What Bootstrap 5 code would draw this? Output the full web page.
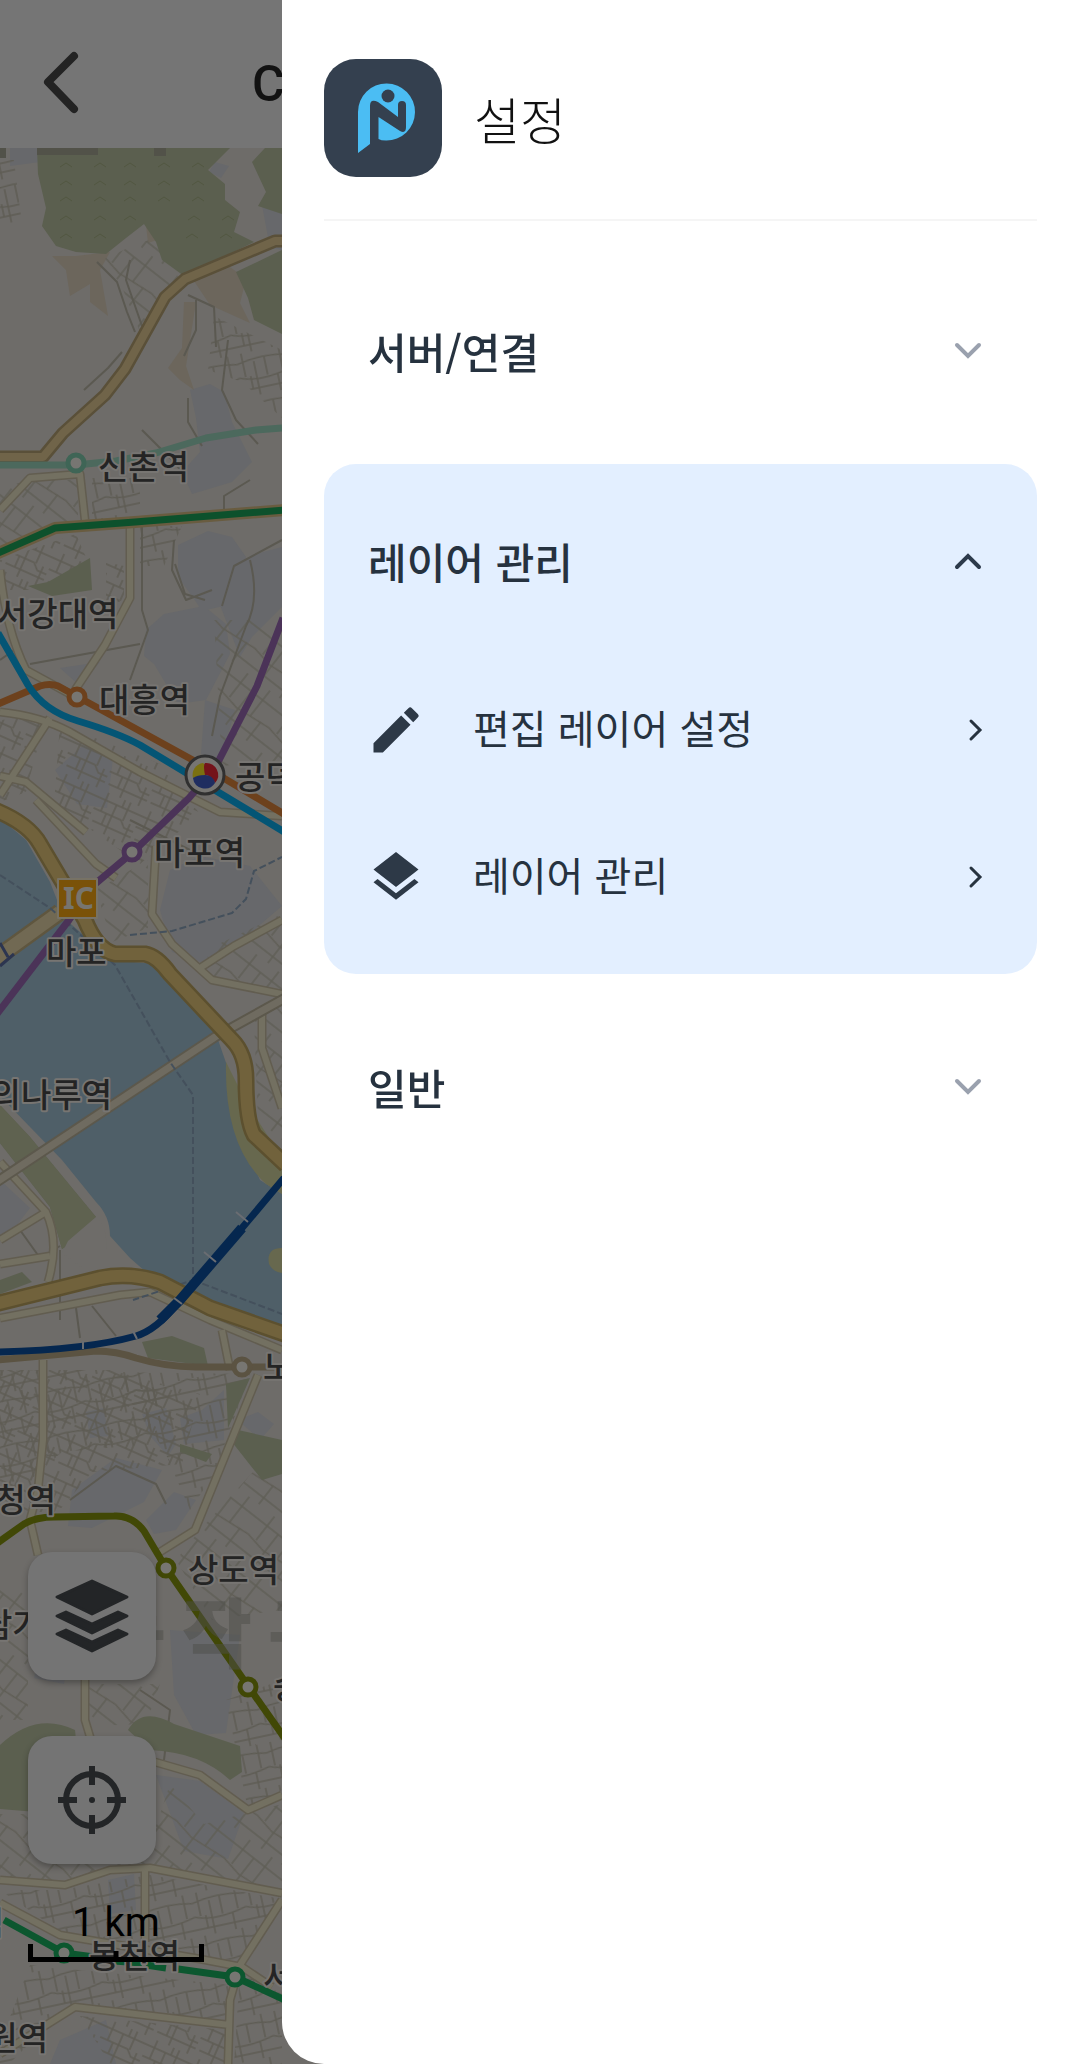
<!DOCTYPE html>
<html lang="ko">
<head>
<meta charset="utf-8">
<meta name="viewport" content="width=device-width, initial-scale=1">
<title>설정</title>
<link href="https://cdn.jsdelivr.net/npm/bootstrap@5.3.0/dist/css/bootstrap.min.css" rel="stylesheet">
<style>
  body { font-family: Roboto, "Noto Sans CJK KR", sans-serif; background: #6e6c69; color: #26323f; }
  .app-screen { min-height: 100vh; overflow: hidden; }
  .app-bar { height: 148px; background: #757575; padding: 18px 40px 0; color: #121212; }
  .back-btn { width: 42px; height: 64px; }
  .app-title { font-size: 50px; line-height: 64px; font-weight: 500; margin-left: 170px; padding-top: 2px; white-space: nowrap; }
  .map-pane { min-height: 0; }
  .map-art { position: absolute; left: 0; top: -148px; }
  .map-label { font: 500 33px "Noto Sans CJK KR", sans-serif; fill: #242424; stroke: #777572; stroke-width: 4px; paint-order: stroke; }
  .district-label { font: 900 76px "Noto Sans CJK KR", sans-serif; fill: #4e4d4a; fill-opacity: .5; }
  .map-tools { position: absolute; left: 28px; bottom: 102px; gap: 56px; }
  .tool-btn { width: 128px; height: 128px; border-radius: 24px; background: #747474; box-shadow: 0 3px 6px rgba(0,0,0,.3); }
  .map-scale { width: 176px; margin-top: -18px; color: #000; }
  .map-scale span { font-size: 40px; line-height: 42px; }
  .drawer { --bs-offcanvas-width: calc(100% - 282px); --bs-offcanvas-bg: #fff; border: 0 !important; border-bottom-left-radius: 42px; color: #26323f; }
  .drawer-head { margin: 0 43px 0 42px; padding: 59px 0 42px; gap: 32px; border-bottom: 2px solid #f5f5f5; }
  .drawer-title { font-family: "Noto Sans CJK KR", sans-serif; font-size: 50px; line-height: 64px; font-weight: 300; color: #111; }
  .drawer-body { padding: 33px 43px 0 42px; gap: 16px; font-family: "Noto Sans CJK KR", sans-serif; }
  .menu-group { border-radius: 32px; }
  .menu-group.is-open { background: #e3efff; padding-bottom: 24px; }
  .group-btn { height: 194px; padding: 0 54px 0 44px; font-size: 42px; line-height: 60px; font-weight: 500; color: inherit; }
  .is-open .group-btn { margin-bottom: -2px; }
  .menu-link { height: 147px; padding: 0 54px 0 42px; font-size: 40px; line-height: 56px; color: inherit; }
  .menu-link span { padding-bottom: 6px; }
  .menu-link svg:first-child { margin-right: 47px; }
</style>
</head>
<body>
<div class="app-screen position-relative d-flex flex-column">
  <header class="app-bar d-flex align-items-center">
    <button class="back-btn btn p-0 border-0 d-flex" type="button" aria-label="뒤로">
      <svg width="42" height="64" viewBox="0 0 42 64" fill="none" stroke="#232323" stroke-width="8" stroke-linecap="round" stroke-linejoin="round"><path d="M34 5 8 31l26 27"/></svg>
    </button>
    <div class="app-title">C</div>
  </header>
  <main class="map-pane position-relative flex-grow-1">
    <svg class="map-art" width="282" height="2064" viewBox="0 0 282 2064" fill="none" stroke-linejoin="round">
      <defs>
        <clipPath id="mapClip"><path d="M0 148H282V2064H0z"/></clipPath>
        <pattern id="streetsA" width="46" height="40" patternUnits="userSpaceOnUse" patternTransform="rotate(24)"><path d="M0 8h46M0 20h30l6 6h10M4 32h42M8 0v20M20 8v32M32 0v20M40 20v20M14 20v12M26 0v8" stroke="#5e5c54" stroke-width="1.5"/></pattern>
        <pattern id="streetsB" width="52" height="44" patternUnits="userSpaceOnUse" patternTransform="rotate(-12)"><path d="M0 10q26 -6 52 0M0 24q20 8 52 0M0 37h52M6 0v24M17 10v34M28 8v18M38 26v18M44 0v24M11 24v13" stroke="#5e5c54" stroke-width="1.5"/></pattern>
        <pattern id="streetsC" width="60" height="54" patternUnits="userSpaceOnUse" patternTransform="rotate(38)"><path d="M0 12h60M0 30l22 4 38-4M0 46h60M10 0v30M24 12v42M38 0v32M50 30v24" stroke="#605e56" stroke-width="1.5"/></pattern>
      </defs>
      <g clip-path="url(#mapClip)">
        <path fill="#6e6c69" d="M0 148H282V2064H0z"/>
        <!-- built-up blocks -->
        <g fill="#67686b">
          <path d="M190 390l20-6 14 8 8 30 20 40-20 20-40 12-10-22 18-20-4-34zM178 545l30-14 24 6 14 20-10 46-34 8-8-12-16-22zM220 605l6-32 26-18 30-8v60l-30 30-12 20zM146 630l18-16 40-8 22 18 4 30-24 46-28 4-24-40-10-8zM60 668l40-6-20 24zM55 770l30-26 28 14-6 50-30-4zM262 205l20 5v40l-12-2zM215 162l14 4-8 12-12-6zM205 700l30 10-14 50-20-6zM160 910l10-40 30-14 50 10 32 40-70 60-40-14zM0 1180l30 28-20 26-10 6zM86 1412l18-4 4 28-18 2zM142 1414l24-6 10 36-8 12-18-20zM180 1418l22-8 22-20v50l-40 4zM72 1490l44-32 46 12-18 32-52 26-24-2zM146 1520l28-28 22 8-20 30-22 4zM238 1420l20-8 16 12-14 16zM170 1630l70 5-14 98-30 2-22-40zM156 1775l44 6 44 32-16 46-44-8zM108 1880l26-6 2 36-26 4zM60 2040l46-20 10 44H50zM40 1650l30-4-6 38-30-6zM10 148h30v14l-30 4z"/>
        </g>
        <path fill="#6c665c" d="M52 256l24 0 34-4-10 18 8 46-18-14 0-18-20 12-4-26zM190 275l40-8 16 12-6 24 10 20-40-18zM184 302l12 0-10 64 8 24-14-10-12-12 14-20zM146 225l16-8-2 22-12 4z"/>
        <g>
          <path fill="url(#streetsB)" d="M0 160h14l8 64H0z"/><path fill="url(#streetsC)" d="M98 262l34-16 34-12 16 38-30 36-12 24-20-50z"/>
          <path fill="url(#streetsB)" d="M214 316l68 34v68l-40-36-34-12z"/>
          <path fill="url(#streetsC)" d="M0 490l26-10h52v42L0 548z"/><path fill="url(#streetsB)" d="M92 478h48v42H92zM140 526h42l-18 40h-24z"/>
          <path fill="url(#streetsA)" d="M0 560l76-26 12 28-30 28H0zM106 562l18 4v36h-18zM0 720l46-4-20 76-26 10zM60 724l100 40 40 50-60 50-86-60z"/>
          <path fill="url(#streetsC)" d="M214 620h68v140l-60 6zM96 890l52-30v68l-36 14zM206 950l76-36v80l-70-18zM254 1020l28-20v140l-24-20z"/>
          <path fill="url(#streetsA)" d="M0 1370h110l90 24-18 70-90 8-34 40H0z"/><path fill="url(#streetsB)" d="M110 1372l140 2-36 100-24 36-26-60z"/>
          <path fill="url(#streetsB)" d="M0 1370h110l60 24-18 50-90 8-34 30H0z"/>
          <path fill="url(#streetsC)" d="M200 1530l82-90v170l-70 10-36-60zM0 1590h28v130H0zM84 1684h76l-14 40-56 2zM0 1814h30l120 30 20-60 34 40 78-20v86l-132-24-90 16-60-6z"/>
          <path fill="url(#streetsB)" d="M0 1890h60l90-15 132 24-44 62-120-16-50-8zM30 1965l200 20-4 40-150-18-46 36-20 20H0v-20zM240 1970l42 24v70h-48zM226 1700l56-20v110l-34 20z"/>
          <path fill="url(#streetsA)" d="M80 2016l146 14v34H110z"/>
        </g>
        <!-- minor streets -->
        <path stroke="#5b5951" stroke-width="2" d="M97 262l20 20 10 30 8 20M130 260l-4 20 16 46M188 295l26 12 2 40M196 300l0 30-12 26M84 390l24-22 14-16M188 398v24l14 24M228 340l-6 50 14 30 22 24M250 480l-26 16v18M142 430l30 30 12 14M174 540l-2 30 14 30 26-10M282 540l-48 26-12 40M30 664l110-20M142 520v90l6 20-18 50M250 560q10 40-4 66l-26 70-8 40M205 600l-20-6-10-30M130 820l60 30M0 660l20-14M70 1500l46-34 40 18 10 20M140 1690l30 20-6 50M20 1230l20 28 20-12M76 1308l4 30M92 1306l24 30M60 1250v70"/>
        <!-- greenery -->
        <g fill="#5b5f4f">
          <path d="M37 148H230l-22 22 17 14v16l15 12-6 20 20 10-70 34-22-16-6-18-12-18-18 14-20 16-30-2-20-6-14-20 4-18-8-34zM282 148h-17l-13 14 14 30-8 14 24 8zM236 272l46-22v84l-28-14-6-22z"/>
          <path d="M28 586l20-4 42-24 2 32-40 6zM0 1105l30 32 66 80-10 16-24 16-12-42-50-64zM0 1280l22-8 10 10-32 12zM142 1342l30-6 32 12 4 18-60-8zM226 1384l24-6-22 50zM238 1430l44 10v34l-20 6-30-38zM180 1444l32 10-6 8-26-10zM0 1745q36-34 75-15l6 60-44 22-37-3zM128 1730q14-24 46-6l66 22 2 26-12 8q-30-28-80-30z"/>
        </g>
        <path stroke="#525741" stroke-width="1" d="M60 167l6-4 6 4m22 0l6-4 6 4m18 0l6-4 6 4m22 0l6-4 6 4m22 0l6-4 6 4M60 185l6-4 6 4m22 0l6-4 6 4m18 0l6-4 6 4m22 0l6-4 6 4m22 0l6-4 6 4M60 201l6-4 6 4m22 0l6-4 6 4m18 0l6-4 6 4m22 0l6-4 6 4m22 0l6-4 6 4M60 220l6-4 6 4m22 0l6-4 6 4m18 0l6-4 6 4m52 0l6-4 6 4m22 0l6-4 6 4M60 238l6-4 6 4m22 0l6-4 6 4m80 0l6-4 6 4m22 0l6-4 6 4"/>
        <path fill="#525249" d="M0 148h6v10H0zM37 148h61v7H37zM154 148h12v8h-12z"/>
        <!-- river -->
        <path fill="#4f5f68" d="M0 818l26 22 24 42 14 36 48 42 44 4 60 70 16 46 4 46 24 54 22 14v136l-72-24-64-34-16-14-20-22q0-20-14-34L62 1160 0 1096z"/>
        <path fill="#5f6250" d="M0 1105l30 32 66 80-10 16-24 16-12-42-50-64z"/>
        <path fill="#67684e" d="M226 1062q-2 84 40 122l16 10v-36l-36-56zM282 1248q-16 0-13 16 4 8 13 9z"/>
        <path fill="#6e6c69" d="M96 1217q12 10 10 32l-22 20-22-16 6-12z"/>
        <!-- secondary roads -->
        <g>
          <path stroke="#625d50" stroke-width="9" d="M0 510l30-32 50-4 5 46M130 528v70l-25 47-30 45M0 570q6 60 26 100l44 24M0 712q40 4 70 20l70 40 80 40 62 4M50 718L0 795M0 776l26 6 60 50M36 800l60 64 20 14M156 846l-4 68 20 30 40 36 70 14M200 968l34-22 48-26M262 1008v40l20 60M0 1240l46-28-46-50M46 1212q14 30 2 70M0 1264l50-8M0 1318l120-23 30-3 60 28 72 30M222 1330l8 40M43 1360v80l-5 50-8 30 8 35M258 1375l-63 155-35 22M85 1680v40l6 20M155 1762l45 13 48 35 34-15M0 1880l65 5 45-15 40-2 132 25M0 1903l60 32 140 24 42 8 30 20M145 1870v72M282 1900l-42 65-10 35-2 64M0 2054l75-47 155 18"/>
          <path stroke="#737061" stroke-width="6" d="M0 510l30-32 50-4 5 46M130 528v70l-25 47-30 45M0 570q6 60 26 100l44 24M0 712q40 4 70 20l70 40 80 40 62 4M50 718L0 795M0 776l26 6 60 50M36 800l60 64 20 14M156 846l-4 68 20 30 40 36 70 14M200 968l34-22 48-26M262 1008v40l20 60M0 1240l46-28-46-50M46 1212q14 30 2 70M0 1264l50-8M0 1318l120-23 30-3 60 28 72 30M222 1330l8 40M43 1360v80l-5 50-8 30 8 35M258 1375l-63 155-35 22M85 1680v40l6 20M155 1762l45 13 48 35 34-15M0 1880l65 5 45-15 40-2 132 25M0 1903l60 32 140 24 42 8 30 20M145 1870v72M282 1900l-42 65-10 35-2 64M0 2054l75-47 155 18"/>
        </g>
        <!-- bridges -->
        <path stroke="#5c584c" stroke-width="11" d="M-5 1183L215 1037l72-40"/><path stroke="#6f6b60" stroke-width="7" d="M-5 1183L215 1037l72-40"/>
        <path stroke="#5f563f" stroke-width="18" d="M-5 959L60 912"/><path stroke="#716953" stroke-width="13" d="M-5 959L60 912"/>
        <path stroke="#44505c" stroke-width="2" stroke-dasharray="7 3" d="M0 875l50 33 65 57 55 97 23 33v185l-60 20M193 1280l89 34M130 935l42-4 60-18 14-14 8-28 28-14"/>
        <!-- main roads -->
        <path stroke="#5a5039" stroke-width="13" d="M-5 457H43l20-24 42-38 20-26 40-72 20-18 90-38h20"/><path stroke="#706449" stroke-width="8" d="M-5 457H43l20-24 42-38 20-26 40-72 20-18 90-38h20"/>
        <path stroke="#5c502f" stroke-width="17" d="M-5 810q34 14 45 34l45 76q12 30 30 34h30q12 2 25 20l62 66q14 14 14 40 0 40 8 55l32 30M-5 1304l105-26q30-6 60 4l50 26 80 28"/><path stroke="#71623c" stroke-width="12" d="M-5 810q34 14 45 34l45 76q12 30 30 34h30q12 2 25 20l62 66q14 14 14 40 0 40 8 55l32 30M-5 1304l105-26q30-6 60 4l50 26 80 28"/>
        <!-- rail lines -->
        <path stroke="#4c695d" stroke-width="7" d="M0 465h76l40-4 40-8 50-15 50-8 26-2"/>
        <path stroke="#695c40" stroke-width="12" d="M-4 554l59-26 80-6 150-12"/><path stroke="#0d512c" stroke-width="7" d="M-4 554l59-26 80-6 150-12"/>
        <path stroke="#6d411d" stroke-width="7" d="M-2 704l42-18q10-3 18 0l20 11 122 67 84 50"/>
        <path stroke="#045575" stroke-width="7" d="M-2 633l30 52q16 26 50 36 40 12 62 24l146 88"/>
        <path stroke="#4b3358" stroke-width="7" d="M283 618l-26 68-42 82-26 30-56 54-38 32-26 36-72 94"/>
        <path stroke="#5b5342" stroke-width="7" d="M-4 1360l100-9q20 0 40 7 30 9 60 9h90"/>
        <path stroke="#05274f" stroke-width="7" d="M-4 1352q90-2 140-16 20-6 40-31l66-77 42-50"/>
        <path stroke="#05274f" stroke-width="10" d="M160 1320l20-20 62-72"/><path stroke="#6a6d72" stroke-width="2" d="M236 1212l12 10M204 1252l12 10M174 1298l8 6M133 1331l4 8M83 1341v8"/>
        <path stroke="#414806" stroke-width="7" d="M-4 1544l28-20q12-7 30-7l60-1q18-1 30 15l22 37 82 118 38 54"/>
        <path stroke="#0c572f" stroke-width="7" d="M4 1920l60 33 30 4M114 1961l28 2M146 1965l20 3M178 1969l57 8 50 23"/>
        <!-- faint district name -->
        <g class="district-label"><text x="96" y="1662">동</text><text x="182" y="1662">작</text><text x="268" y="1662">구</text></g>
        <g fill="#777672" stroke-width="5">
          <circle cx="76" cy="463" r="8" stroke="#3f6556"/><circle cx="77" cy="697" r="8" stroke="#6d411d"/><circle cx="132" cy="852" r="8" stroke="#4b3358"/><circle cx="242" cy="1367" r="8" stroke="#5b5342"/><circle cx="166" cy="1568" r="8" stroke="#414806"/><circle cx="248" cy="1687" r="8" stroke="#414806"/><circle cx="64" cy="1953" r="8" stroke="#0c572f"/><circle cx="235" cy="1977" r="8" stroke="#0c572f"/>
        </g>
        <circle cx="205" cy="775" r="19" fill="#767572" stroke="#303030" stroke-width="3"/>
        <path fill="#7a7010" d="M205 775l-12 3a12 12 0 0 1 10-15q6 3 2 12z"/><path fill="#74131a" d="M205 775q-2-10 0-12a12 12 0 0 1 10 20q-4-8-10-8z"/><path fill="#1f2d60" d="M193 778q4-3 12-3 8 0 10 8a12 12 0 0 1-22-5z"/>
        <path fill="#7a5208" stroke="#777265" stroke-width="2" d="M58 879h39v39H58z"/>
        <text x="63" y="909" font-family="Noto Sans" font-size="30" font-weight="700" fill="#77756f">IC</text>
        <path stroke="#2c3550" stroke-width="3" d="M0 943l8 14M0 966l14-12"/>
        <g class="map-label">
          <text x="98" y="479">신촌역</text><text x="-3" y="626">서강대역</text><text x="99" y="712">대흥역</text><text x="235" y="789">공덕역</text><text x="154" y="865">마포역</text><text x="46" y="964">마포</text><text x="112" y="1107" text-anchor="end">의나루역</text><text x="263" y="1379">노량진역</text><text x="56" y="1512" text-anchor="end">청역</text><text x="188" y="1582">상도역</text><text x="-18" y="1637">남가</text><text x="273" y="1699">숭실대입구역</text><text x="4" y="1935" text-anchor="end">림</text><text x="89" y="1968">봉천역</text><text x="263" y="1989">서울대입구역</text><text x="48" y="2050" text-anchor="end">원역</text>
        </g>
      </g>
    </svg>
    <div class="map-tools d-flex flex-column">
      <button class="tool-btn btn p-0 border-0 d-flex align-items-center justify-content-center" type="button" aria-label="레이어">
        <svg width="76" height="76" viewBox="0 0 76 76" fill="#232527" stroke="#232527" stroke-width="3" stroke-linejoin="round"><path d="M38 3 73 19 38 36 3 19z"/><path d="M3 38l9-4 26 12 26-12 9 4-35 17zM3 56l9-4 26 12 26-12 9 4-35 17z"/></svg>
      </button>
      <button class="tool-btn btn p-0 border-0 d-flex align-items-center justify-content-center" type="button" aria-label="현재 위치">
        <svg width="68" height="68" viewBox="0 0 68 68" fill="none" stroke="#232527" stroke-width="6"><circle cx="34" cy="34" r="26"/><path d="M34 0v19M34 49v19M0 34h19M49 34h19"/><circle cx="34" cy="34" r="3" fill="#232527" stroke="none"/></svg>
      </button>
      <div class="map-scale d-flex flex-column align-items-center">
        <span>1 km</span>
        <svg width="176" height="18" viewBox="0 0 176 18" fill="none" stroke="#000" stroke-width="5"><path d="M2.500 0v15.500h171V0M88 7v8"/></svg>
      </div>
    </div>
  </main>
</div>

<aside class="drawer offcanvas offcanvas-end show" tabindex="-1" data-bs-backdrop="false" data-bs-scroll="true" aria-labelledby="drawerTitle">
  <div class="drawer-head d-flex align-items-center">
    <svg width="118" height="118" viewBox="0 0 118 118" aria-hidden="true">
      <rect width="118" height="118" rx="32" fill="#34404f"/>
      <path fill="#4bbdf3" d="M34 94V53a28.500 28.500 0 1 1 28 28.500q-5 0-7.500-1.500V58L76 72q6 3 6-4V46q0-4-4-4t-4 4v12L54 43q-8-4-8 4v38z"/>
      <circle cx="64" cy="37" r="6.500" fill="#34404f"/>
    </svg>
    <h1 class="drawer-title mb-0" id="drawerTitle">설정</h1>
  </div>
  <nav class="drawer-body d-flex flex-column" aria-label="설정">
    <section class="menu-group">
      <button class="group-btn btn border-0 w-100 d-flex align-items-center justify-content-between" type="button" aria-expanded="false">서버/연결
        <svg width="30" height="18" viewBox="0 0 30 18" fill="none" stroke="#9aa1ae" stroke-width="4" stroke-linecap="round"><path d="M4 3l11 11L26 3"/></svg>
      </button>
    </section>
    <section class="menu-group is-open">
      <button class="group-btn btn border-0 w-100 d-flex align-items-center justify-content-between" type="button" data-bs-toggle="collapse" data-bs-target="#layerMenu" aria-expanded="true" aria-controls="layerMenu">레이어 관리
        <svg width="30" height="18" viewBox="0 0 30 18" fill="none" stroke="#2c3a4b" stroke-width="4" stroke-linecap="round"><path d="M4 15L15 4l11 11"/></svg>
      </button>
      <div class="collapse show" id="layerMenu">
        <a class="menu-link d-flex align-items-center text-decoration-none" href="#">
          <svg width="60" height="60" viewBox="0 0 24 24" fill="#2d3947"><path d="M3 17.250V21h3.750L17.810 9.940l-3.750-3.750zM20.710 7.040a1 1 0 0 0 0-1.410l-2.340-2.340a1 1 0 0 0-1.410 0l-1.830 1.830 3.750 3.750z"/></svg>
          <span class="flex-grow-1">편집 레이어 설정</span>
          <svg width="16" height="24" viewBox="0 0 16 24" fill="none" stroke="#26323f" stroke-width="3" stroke-linecap="round"><path d="M4 3l9 9-9 9"/></svg>
        </a>
        <a class="menu-link d-flex align-items-center text-decoration-none" href="#">
          <svg width="60" height="60" viewBox="0 0 24 24" fill="#2d3947"><path d="M11.990 18.540l-7.370-5.730L3 14.070l9 7 9-7-1.630-1.270zM12 16l7.360-5.730L21 9l-9-7-9 7 1.630 1.270z"/></svg>
          <span class="flex-grow-1">레이어 관리</span>
          <svg width="16" height="24" viewBox="0 0 16 24" fill="none" stroke="#26323f" stroke-width="3" stroke-linecap="round"><path d="M4 3l9 9-9 9"/></svg>
        </a>
      </div>
    </section>
    <section class="menu-group">
      <button class="group-btn btn border-0 w-100 d-flex align-items-center justify-content-between" type="button" aria-expanded="false">일반
        <svg width="30" height="18" viewBox="0 0 30 18" fill="none" stroke="#9aa1ae" stroke-width="4" stroke-linecap="round"><path d="M4 3l11 11L26 3"/></svg>
      </button>
    </section>
  </nav>
</aside>
<script src="https://cdn.jsdelivr.net/npm/bootstrap@5.3.0/dist/js/bootstrap.bundle.min.js"></script>
</body>
</html>
